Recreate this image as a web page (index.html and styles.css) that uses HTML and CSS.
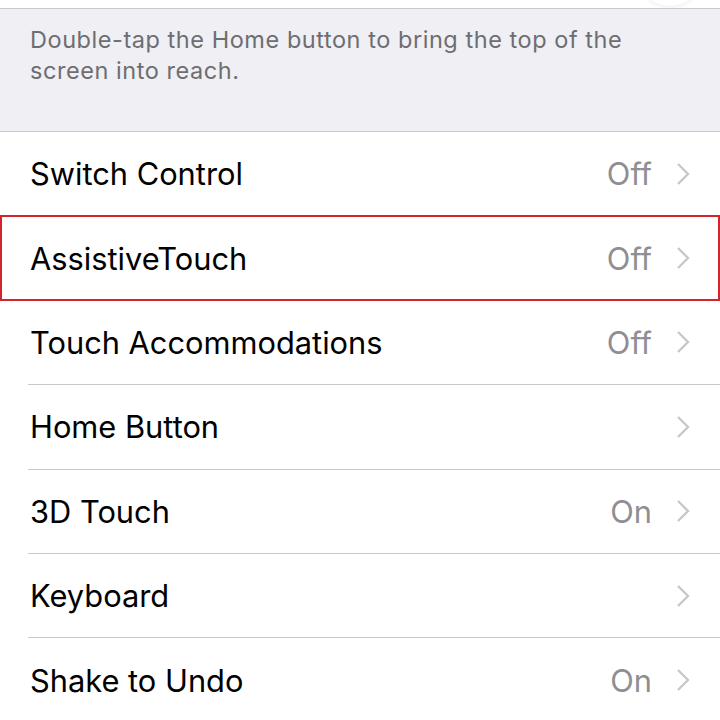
FILE: index.html
```html
<!DOCTYPE html>
<html lang="en">
<head>
    <meta charset="UTF-8">
    <meta name="viewport" content="width=device-width, initial-scale=1.0">
    <title>Interaction</title>
    <link rel="stylesheet" href="styles.css">
</head>
<body>

    <div class="grupo-arriba">
        <div class="interruptor"></div> <!-- toggle cortado arriba -->
    </div>

    <div class="nota">
        Double-tap the Home button to bring the top of the screen into reach.
    </div>

    <ul class="lista">
        <li class="fila">
            <span class="titulo">Switch Control</span>
            <span class="valor">Off</span>
            <svg class="flecha" viewBox="0 0 14 24"><path d="M2 2 L12 12 L2 22"/></svg>
        </li>
        <li class="fila marcada">
            <span class="titulo">AssistiveTouch</span>
            <span class="valor">Off</span>
            <svg class="flecha" viewBox="0 0 14 24"><path d="M2 2 L12 12 L2 22"/></svg>
        </li>
        <li class="fila">
            <span class="titulo">Touch Accommodations</span>
            <span class="valor">Off</span>
            <svg class="flecha" viewBox="0 0 14 24"><path d="M2 2 L12 12 L2 22"/></svg>
        </li>
        <li class="fila">
            <span class="titulo">Home Button</span>
            <span class="valor"></span>
            <svg class="flecha" viewBox="0 0 14 24"><path d="M2 2 L12 12 L2 22"/></svg>
        </li>
        <li class="fila">
            <span class="titulo">3D Touch</span>
            <span class="valor">On</span>
            <svg class="flecha" viewBox="0 0 14 24"><path d="M2 2 L12 12 L2 22"/></svg>
        </li>
        <li class="fila">
            <span class="titulo">Keyboard</span>
            <span class="valor"></span>
            <svg class="flecha" viewBox="0 0 14 24"><path d="M2 2 L12 12 L2 22"/></svg>
        </li>
        <li class="fila">
            <span class="titulo">Shake to Undo</span>
            <span class="valor">On</span>
            <svg class="flecha" viewBox="0 0 14 24"><path d="M2 2 L12 12 L2 22"/></svg>
        </li>
    </ul>

</body>
</html>
```

FILE: styles.css
```css
body {
    margin: 0;
    background: #efeff4;
    font-family: 'Inter', 'Liberation Sans', Arial, sans-serif;
    overflow: hidden;
    width: 720px;
    height: 720px;
}

.grupo-arriba {
    height: 8px;
    background: #fff;
    border-bottom: 1px solid #c8c7cc;
    position: relative;
    overflow: hidden;
}

.interruptor {
    position: absolute;
    right: 22px;
    top: -40px;
    width: 56px;
    height: 46px;
    border-radius: 50%;
    background: #fff;
    box-shadow: 0 2px 4px rgba(0, 0, 0, 0.06);
}

.nota {
    padding: 15px 60px 0 30px;
    height: 107px;
    font-size: 23.5px;
    line-height: 31px;
    letter-spacing: 0.55px;
    color: #6d6d72;
    border-bottom: 1px solid #c8c7cc;
}

.lista {
    list-style: none;
    margin: 0;
    padding: 0 0 0 28px;
    background: #fff;
}

.fila {
    display: flex;
    align-items: center;
    height: 83.4px;
    border-bottom: 1px solid #c8c7cc;
    padding-right: 30px;
    position: relative;
}

.titulo {
    flex: 1;
    font-size: 30.8px;
    color: #000;
    padding-left: 2px;
}

.valor {
    font-size: 30.8px;
    color: #8e8e93;
    margin-right: 24px;
}

.flecha {
    width: 14px;
    height: 24px;
    fill: none;
    stroke: #c7c7cc;
    stroke-width: 2.4;
}

/* recuadro rojo de resaltado */
.fila.marcada::before {
    content: '';
    position: absolute;
    left: -28px;
    right: 0;
    top: -1px;
    bottom: -1px;
    border: 2px solid #d3242c;
}
```
